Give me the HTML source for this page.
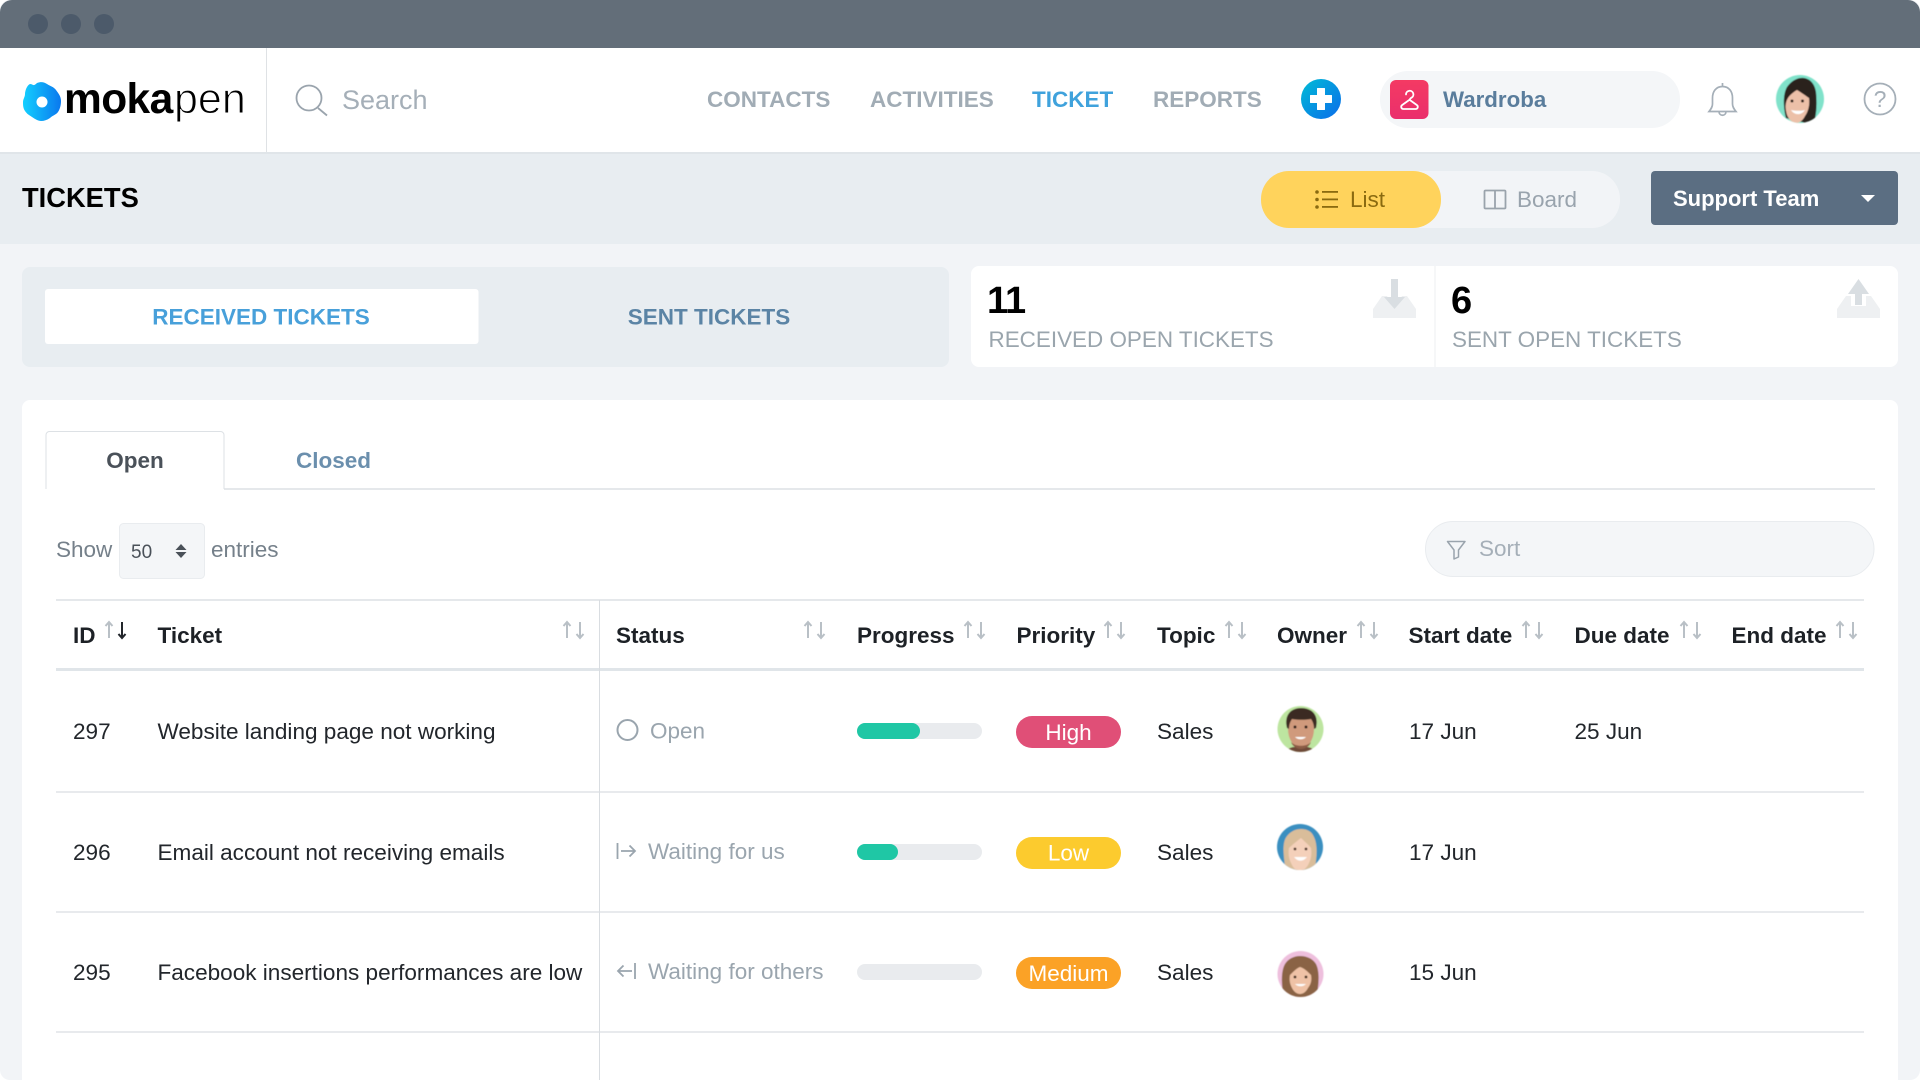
<!DOCTYPE html>
<html lang="en"><head><meta charset="utf-8"><title>Tickets</title>
<style>
html,body{margin:0;padding:0;background:#fff;width:1920px;height:1080px;overflow:hidden}
svg{display:block}
text{font-family:"Liberation Sans",Arial,sans-serif;font-size:22.5px;white-space:pre}
.b{font-weight:700}
.nav{font-weight:700;font-size:22.5px;fill:#a1acb5}
.h{font-weight:700;fill:#1d2126}
.c{fill:#22262b;font-size:22.55px}
.s{fill:#9aa5ae}
.bd{fill:#fff;text-anchor:middle}
</style></head><body>
<svg width="1920" height="1080" viewBox="0 0 1920 1080" xmlns="http://www.w3.org/2000/svg">
<defs>
<linearGradient id="lg" x1="0" x2="1" y1="0" y2="0"><stop offset="0" stop-color="#13d0ff"/><stop offset="1" stop-color="#0a78ee"/></linearGradient>
<linearGradient id="pg" x1="0" x2="1" y1="0" y2="1"><stop offset="0" stop-color="#00bcd6"/><stop offset="1" stop-color="#0b6cea"/></linearGradient>
<linearGradient id="rg" x1="0" x2="0" y1="0" y2="1"><stop offset="0" stop-color="#f43a63"/><stop offset="1" stop-color="#ea2f6c"/></linearGradient>
<filter id="bl" x="-10%" y="-10%" width="120%" height="120%"><feGaussianBlur stdDeviation="0.6"/></filter>
<g id="sa" fill="none" stroke="#b9c0c6" stroke-width="2"><path d="M4 1V17M.5 5L4 1l3.500 4"/><path d="M17 1V17M13.500 13L17 17l3.500-4"/></g>
<clipPath id="c0"><circle cx="1800" cy="99" r="24"/></clipPath>
<clipPath id="c1"><circle cx="1300.500" cy="729" r="23"/></clipPath>
<clipPath id="c2"><circle cx="1300" cy="847" r="23"/></clipPath>
<clipPath id="c3"><circle cx="1300.500" cy="974" r="23"/></clipPath>
</defs>

<rect width="1920" height="1080" rx="10" fill="#f2f4f7"/>
<!-- title bar -->
<path d="M0 48V12A12 12 0 0 1 12 0H1908A12 12 0 0 1 1920 12V48Z" fill="#636e79"/>
<circle cx="38" cy="24" r="10" fill="#4c5a6a"/><circle cx="71" cy="24" r="10" fill="#4c5a6a"/><circle cx="104" cy="24" r="10" fill="#4c5a6a"/>

<!-- nav -->
<rect y="48" width="1920" height="104" fill="#fff"/>
<rect y="152" width="1920" height="2" fill="#e0e5e9"/>
<rect x="266" y="48" width="1" height="104" fill="#dfe2e5"/>
<path d="M30 84c3 0 3 3 7-1c4-1.500 7-1 10 1c3 2 7 3 9 6c2 3 5 6 5 11c0 4-1 8-3 11c-2 3-5 3-8 6c-3 2-6 3-9 3c-3 0-6-2-9-4c-3-2-5-3-7-6c-2-3-2-6-2-9c0-3 2-5 2-8c0-3 2-9 5-10z" fill="url(#lg)"/>
<circle cx="42" cy="102" r="5.500" fill="#fff"/>
<text x="64" y="113" style="font-size:42.500px;font-weight:700;letter-spacing:-.6px" fill="#000">moka</text>
<text x="174" y="113" style="font-size:43px;stroke:#fff;stroke-width:1px;paint-order:normal" fill="#000">pen</text>

<g fill="none" stroke="#9aa4ad" stroke-width="1.800"><circle cx="309" cy="98" r="12.500"/><path d="M318 108L327 115.500"/></g>
<text x="342" y="109" style="font-size:27px" fill="#a5afb8">Search</text>

<text x="707" y="107" class="nav">CONTACTS</text>
<text x="870" y="107" class="nav">ACTIVITIES</text>
<text x="1032" y="107" class="nav" style="fill:#3fa2dc">TICKET</text>
<text x="1153" y="107" class="nav">REPORTS</text>

<circle cx="1321" cy="99" r="20" fill="url(#pg)"/>
<path d="M1317.500 88.500h7v7h7v7h-7v7h-7v-7h-7v-7h7z" fill="#fff" stroke="#fff" stroke-linejoin="round"/>

<rect x="1380" y="71" width="300" height="57" rx="28" fill="#f4f6f8"/>
<rect x="1390" y="80" width="38.500" height="39" rx="6" fill="url(#rg)"/>
<path d="M1406 94.500a3.700 3.700 0 1 1 5.500 3.200c-1 .5-1.700 1-1.700 2.300l7 5c1.800 1.300 1 4-1.200 4h-12.200c-2.200 0-3-2.700-1.200-4l7-5" fill="none" stroke="#fff" stroke-width="1.800" stroke-linecap="round" stroke-linejoin="round"/>
<text x="1443" y="107" class="b" style="font-size:22.300px" fill="#5a7d9c">Wardroba</text>

<path d="M1722.500 86.500c-6.500 0-10 5-10 11.500v6c0 3-1.500 5-3.500 7.500h27c-2-2.500-3.500-4.500-3.500-7.500v-6c0-6.500-3.500-11.500-10-11.500zM1722.500 86.500V83M1719 111.500c0 5 7 5 7 0" fill="none" stroke="#a5afb8" stroke-width="1.700"/>

<!-- main avatar -->
<g filter="url(#bl)"><circle cx="1800" cy="99" r="24" fill="#80e2ca"/>
<g clip-path="url(#c0)">
<path d="M1786 118c-3-12-3-24 1-31c4-6 11-10 17-9c7 1 11 7 12 14c1 10 1 20-2 31l-8 0z" fill="#2b201c"/>
<path d="M1786 103c1-6 6-10 11-13c5 3 9 6 12 8c1 7-1 14-4 18c-2 4-5 7-9 7c-3 0-7-3-9-8c-1-4-2-8-1-12z" fill="#ecc0a8"/>
<path d="M1791 110c3 5 10 6 14 0c-4 1-9 1-14 0z" fill="#fff"/>
<circle cx="1792" cy="101" r="1.500" fill="#2b1c17"/><circle cx="1802.500" cy="101" r="1.500" fill="#2b1c17"/>
</g></g>

<circle cx="1880" cy="99" r="15.500" fill="none" stroke="#a5afb8" stroke-width="1.800"/>
<text x="1880" y="107" text-anchor="middle" style="font-size:23px" fill="#a5afb8">?</text>

<!-- sub header -->
<rect y="154" width="1920" height="90" fill="#e8edf1"/>
<text x="22" y="207" class="b" style="font-size:27.300px" fill="#000">TICKETS</text>

<rect x="1300" y="171" width="320" height="57" rx="28" fill="#f2f4f7"/>
<rect x="1261" y="171" width="180" height="57" rx="28" fill="#ffd35c"/>
<g fill="#8a6a10"><circle cx="1317" cy="192" r="1.800"/><circle cx="1317" cy="199.500" r="1.800"/><circle cx="1317" cy="207" r="1.800"/><rect x="1322" y="191" width="16" height="1.800"/><rect x="1322" y="198.500" width="16" height="1.800"/><rect x="1322" y="206" width="16" height="1.800"/></g>
<text x="1350" y="207" fill="#8a6a10">List</text>
<g fill="none" stroke="#9aa3ac" stroke-width="1.800"><rect x="1484.500" y="190.500" width="21" height="18" rx="1"/><path d="M1495 190.500V208.500"/></g>
<text x="1517" y="207" fill="#99a3ad">Board</text>

<rect x="1651" y="171" width="247" height="54" rx="4" fill="#5b6e82"/>
<text x="1673" y="206" class="b" style="font-size:22px" fill="#fff">Support Team</text>
<path d="M1861 195h14l-7 7z" fill="#fff"/>

<!-- ticket tabs -->
<rect x="22" y="267" width="927" height="100" rx="8" fill="#e8edf1"/>
<rect x="45" y="289" width="433.500" height="55" rx="3" fill="#fff"/>
<text x="261" y="324.500" text-anchor="middle" class="b" fill="#48a0da">RECEIVED TICKETS</text>
<text x="709" y="324.500" text-anchor="middle" class="b" fill="#5b84a5">SENT TICKETS</text>

<!-- stat cards -->
<rect x="971" y="266" width="927" height="101" rx="8" fill="#fff"/>
<rect x="1434.500" y="266" width="1" height="101" fill="#eceff2"/>
<text x="987" y="313" class="b" style="font-size:38px;letter-spacing:-1px" fill="#000">11</text>
<text x="1451" y="313" class="b" style="font-size:38px" fill="#000">6</text>
<text x="988.500" y="347" style="font-size:22.450px" fill="#9aa5ad">RECEIVED OPEN TICKETS</text>
<text x="1452" y="347" style="font-size:22.450px" fill="#9aa5ad">SENT OPEN TICKETS</text>
<path d="M1382 296L1373 309V318H1416V309L1407 296H1402L1394.500 309L1387 296Z" fill="#eef0f2"/>
<path d="M1391 279H1398V297H1405L1394.500 309L1384 297H1391Z" fill="#d9dee2"/>
<path d="M1846 296L1837 309V318H1880V309L1871 296H1866V306H1851V296Z" fill="#eef0f2"/>
<path d="M1858.500 279L1869 294H1862V305H1855V294H1848Z" fill="#d9dee2"/>

<!-- main card -->
<path d="M22 1090V408A8 8 0 0 1 30 400H1890A8 8 0 0 1 1898 408V1090Z" fill="#fff"/>

<!-- tabs -->
<rect x="224" y="488" width="1651" height="2" fill="#e5e8eb"/>
<path d="M46 489V435A3.500 3.500 0 0 1 49.500 431.500H220.500A3.500 3.500 0 0 1 224 435V489" fill="#fff" stroke="#dde1e5"/>
<text x="135" y="468" text-anchor="middle" class="b" fill="#4a5159">Open</text>
<text x="296" y="468" class="b" fill="#6b8fad">Closed</text>

<text x="56" y="557" fill="#75808a">Show</text>
<rect x="119.500" y="523.500" width="85" height="55" rx="4" fill="#f4f6f8" stroke="#e9ecef"/>
<text x="131" y="558" style="font-size:19px" fill="#4a5159">50</text>
<path d="M181 544l5.500 6h-11zM181 558l-5.500-6h11z" fill="#4a5159"/>
<text x="211" y="557" fill="#75808a">entries</text>

<rect x="1425.500" y="521.500" width="448.500" height="55" rx="27.500" fill="#f4f6f8" stroke="#e9ecef"/>
<path d="M1447.500 541.500H1465L1458.500 550V557L1454 559V550Z" fill="none" stroke="#9aa4ad" stroke-width="1.500" stroke-linejoin="round"/>
<text x="1479" y="556" fill="#a5afb8">Sort</text>

<!-- table lines -->
<rect x="56" y="599" width="1808" height="2" fill="#e5e8eb"/>
<rect x="56" y="668" width="1808" height="3" fill="#e0e5e9"/>
<rect x="56" y="791" width="1808" height="2" fill="#e8eaed"/>
<rect x="56" y="911" width="1808" height="2" fill="#e8eaed"/>
<rect x="56" y="1031" width="1808" height="2" fill="#e8eaed"/>
<rect x="599" y="600" width="1" height="480" fill="#d9dde1"/>

<!-- header -->
<text x="73" y="643" class="h">ID</text>
<text x="157.500" y="643" class="h">Ticket</text>
<text x="616" y="643" class="h">Status</text>
<text x="857" y="643" class="h">Progress</text>
<text x="1016.500" y="643" class="h">Priority</text>
<text x="1157" y="643" class="h">Topic</text>
<text x="1277" y="643" class="h">Owner</text>
<text x="1408.500" y="643" class="h">Start date</text>
<text x="1574.500" y="643" class="h">Due date</text>
<text x="1731.500" y="643" class="h">End date</text>

<g transform="translate(105 621)"><use href="#sa"/><path d="M17 1V17M13.500 13L17 17l3.500-4" fill="none" stroke="#22262b" stroke-width="2"/></g>
<use href="#sa" x="563" y="621"/>
<use href="#sa" x="804" y="621"/>
<use href="#sa" x="964" y="621"/>
<use href="#sa" x="1104" y="621"/>
<use href="#sa" x="1225" y="621"/>
<use href="#sa" x="1357" y="621"/>
<use href="#sa" x="1522" y="621"/>
<use href="#sa" x="1680" y="621"/>
<use href="#sa" x="1836" y="621"/>

<!-- row 1 -->
<text x="73" y="739" class="c">297</text>
<text x="157.500" y="739" class="c">Website landing page not working</text>
<circle cx="627.500" cy="730" r="10" fill="none" stroke="#9aa5ae" stroke-width="2"/>
<text x="650" y="738.500" class="s">Open</text>
<rect x="857" y="723" width="125" height="16" rx="8" fill="#e9ebee"/>
<rect x="857" y="723" width="63" height="16" rx="8" fill="#1fc7a5"/>
<rect x="1016" y="716" width="105" height="32" rx="16" fill="#e04f77"/>
<text x="1068.500" y="740" class="bd">High</text>
<text x="1157" y="739" class="c">Sales</text>
<text x="1409" y="739" class="c">17 Jun</text>
<text x="1574.500" y="739" class="c">25 Jun</text>
<g filter="url(#bl)"><circle cx="1300.500" cy="729" r="23" fill="#bde5a0"/><g clip-path="url(#c1)">
<path d="M1282 754c4-4 7-6 11-7h15c4 1 7 3 11 7z" fill="#6e4a38"/>
<ellipse cx="1301" cy="729" rx="13" ry="19" fill="#d09a7c"/>
<path d="M1287 728c-3-12 3-20 14-20c12 0 18 8 15 20l-2 1c0-4-1-7-3-10c-6 1-13 1-19 0c-2 3-3 6-3 10z" fill="#3a2a20"/>
<circle cx="1295" cy="727" r="1.500" fill="#2b1c17"/><circle cx="1306" cy="727" r="1.500" fill="#2b1c17"/>
<path d="M1295 737c3 3 8 3 11 0z" fill="#fff"/>
<path d="M1291 742c4 5 16 5 20 0c-1 4-6 7-10 7c-4 0-9-3-10-7z" fill="#8a5c44"/></g></g>

<!-- row 2 -->
<text x="73" y="860" class="c">296</text>
<text x="157.500" y="860" class="c">Email account not receiving emails</text>
<path d="M617.500 843V859M621 851H635M629.500 845.500L635 851L629.500 856.500" fill="none" stroke="#9aa5ae" stroke-width="1.800"/>
<text x="648" y="859" class="s">Waiting for us</text>
<rect x="857" y="844" width="125" height="16" rx="8" fill="#e9ebee"/>
<rect x="857" y="844" width="41" height="16" rx="8" fill="#1fc7a5"/>
<rect x="1016" y="837" width="105" height="32" rx="16" fill="#fccb2e"/>
<text x="1068.500" y="860.500" class="bd">Low</text>
<text x="1157" y="860" class="c">Sales</text>
<text x="1409" y="860" class="c">17 Jun</text>
<g filter="url(#bl)"><circle cx="1300" cy="847" r="23" fill="#3a8fc0"/><g clip-path="url(#c2)">
<path d="M1286 872c-3-18-4-30 1-36c4-5 9-7 14-7c7 0 11 3 13 8c4 8 3 22 0 35z" fill="#d9bd9a"/>
<path d="M1289 848c3-3 8-7 12-10c3 3 8 7 10 10c1 6 0 11-2 15c-2 5-6 8-9 8c-4 0-7-3-9-8c-2-4-3-9-2-15z" fill="#f4d0ba"/>
<path d="M1294 857c4 5 9 5 13 0z" fill="#fff"/>
<circle cx="1295" cy="849" r="1.400" fill="#4a3326"/><circle cx="1306" cy="849" r="1.400" fill="#4a3326"/></g></g>

<!-- row 3 -->
<text x="73" y="980" class="c">295</text>
<text x="157.500" y="980" class="c">Facebook insertions performances are low</text>
<path d="M635 963V979M632 971H618M623.500 965.500L618 971L623.500 976.500" fill="none" stroke="#9aa5ae" stroke-width="1.800"/>
<text x="648" y="979" class="s">Waiting for others</text>
<rect x="857" y="964" width="125" height="16" rx="8" fill="#e9ebee"/>
<rect x="1016" y="957" width="105" height="32" rx="16" fill="#fba226"/>
<text x="1068.500" y="981" class="bd">Medium</text>
<text x="1157" y="980" class="c">Sales</text>
<text x="1409" y="980" class="c">15 Jun</text>
<g filter="url(#bl)"><circle cx="1300.500" cy="974" r="23" fill="#eebfdd"/><g clip-path="url(#c3)">
<path d="M1284 998c-3-14-3-27 1-34c3-5 9-8 15-8c7 0 13 3 16 8c4 8 3 22 0 34z" fill="#8a6444"/>
<path d="M1290 975c3-3 7-7 10-8c4 1 8 5 11 8c1 5 0 9-3 13c-2 4-5 6-8 6c-3 0-6-2-8-6c-2-4-3-8-2-13z" fill="#efc2a6"/>
<path d="M1295 984c3 3 8 3 11 0z" fill="#fff"/>
<circle cx="1295" cy="977" r="1.400" fill="#3a2618"/><circle cx="1306" cy="977" r="1.400" fill="#3a2618"/></g></g>
</svg>
</body></html>
